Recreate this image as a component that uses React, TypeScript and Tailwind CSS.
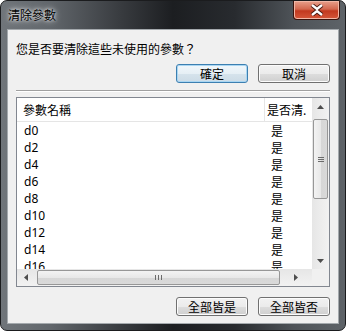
const rows = ["d0", "d2", "d4", "d6", "d8", "d10", "d12", "d14", "d16"];

const cjk = "font-['Noto_Sans_CJK_TC','Noto_Sans',sans-serif]";
const latin = "font-['Noto_Sans','Noto_Sans_CJK_TC',sans-serif]";

const WinButton = ({ label, primary }: { label: string; primary?: boolean }) => (
  <button
    className={`w-[72px] h-[19px] flex items-center justify-center rounded-[3px] border text-[12px] leading-none text-black ${cjk} ${
      primary
        ? "border-[#3c7fb1] bg-[linear-gradient(#f1f7fb_0%,#e6eff5_50%,#d6e3ec_51%,#ccdbe6_100%)] shadow-[inset_0_0_0_1px_#a9d6f2]"
        : "border-[#707070] bg-[linear-gradient(#f2f2f2_0%,#ebebeb_50%,#dddddd_51%,#cfcfcf_100%)] shadow-[inset_0_0_0_1px_#fcfcfc]"
    }`}
  >
    {label}
  </button>
);

const ArrowUp = () => (
  <svg width="7" height="4" viewBox="0 0 7 4">
    <path d="M0 4 L3.5 0 L7 4 Z" fill="#4d4d4d" />
  </svg>
);
const ArrowDown = () => (
  <svg width="7" height="4" viewBox="0 0 7 4">
    <path d="M0 0 L3.5 4 L7 0 Z" fill="#4d4d4d" />
  </svg>
);
const ArrowLeft = () => (
  <svg width="4" height="7" viewBox="0 0 4 7">
    <path d="M4 0 L0 3.5 L4 7 Z" fill="#4d4d4d" />
  </svg>
);
const ArrowRight = () => (
  <svg width="4" height="7" viewBox="0 0 4 7">
    <path d="M0 0 L4 3.5 L0 7 Z" fill="#4d4d4d" />
  </svg>
);

export default function App() {
  return (
    <div className="w-[346px] h-[331px] bg-white">
      <div className="w-[346px] h-[331px] flex flex-col rounded-[7px] border border-[#1b1c1e] bg-[linear-gradient(to_right,#70757a_0%,#62676c_14%,#383b3f_35%,#1c1e21_50%,#282b2f_68%,#4e5358_85%,#5e6368_100%)] overflow-hidden">
        {/* title bar */}
        <div className="h-[28px] flex items-start justify-between">
          <span
            className={`ml-[7px] mt-[6px] text-[12px] leading-[16px] text-black ${cjk} [text-shadow:0_0_6px_#ffffff,0_0_3px_#d8dcdf]`}
          >
            清除參數
          </span>
          <div className="mr-[5px] w-[47px] h-[19px] rounded-b-[4px] border border-t-0 border-[#3a130c] bg-[linear-gradient(#e8a08c_0%,#d3684f_45%,#c2391f_55%,#d5573a_100%)] shadow-[inset_0_0_0_1px_#f1b7a6] flex items-center justify-center">
            <svg width="14" height="12" viewBox="0 0 14 12">
              <path
                d="M2 1 L7 5 L12 1 M2 11 L7 7 L12 11"
                stroke="#4a1a12"
                strokeWidth="4.2"
                fill="none"
              />
              <path
                d="M2 1 L7 5 L12 1 M2 11 L7 7 L12 11"
                stroke="#ffffff"
                strokeWidth="2.4"
                fill="none"
              />
            </svg>
          </div>
        </div>

        {/* client area */}
        <div className="mx-[6px] mb-[6px] flex-1 border border-[#a4a9ad] bg-[#f0f0f0] flex flex-col px-[8px]">
          <p className={`pt-[11px] text-[12px] leading-[16px] text-black ${cjk}`}>
            您是否要清除這些未使用的參數？
          </p>

          <div className="mt-[7px] flex justify-end gap-[10px]">
            <WinButton label="確定" primary />
            <WinButton label="取消" />
          </div>

          <div className="mt-[7px] border-t border-[#a0a0a0] border-b border-b-white" />

          {/* list view */}
          <div className="mt-[5px] h-[190px] border border-[#828790] bg-white flex">
            <div className="flex-1 flex flex-col min-w-0">
              <div className={`h-[24px] flex border-b border-[#e5e5e5] text-[12px] text-black ${cjk}`}>
                <div className="w-[248px] pl-[6px] flex items-center border-r border-[#e5e5e5]">
                  參數名稱
                </div>
                <div className="flex-1 pl-[2px] flex items-center overflow-hidden whitespace-nowrap">
                  是否清.
                </div>
              </div>
              <div className="flex-1 overflow-hidden">
                {rows.map((r) => (
                  <div key={r} className="h-[17px] flex items-center text-[12px] text-black">
                    <div className={`w-[248px] pl-[7px] ${latin}`}>{r}</div>
                    <div className={`pl-[6px] ${cjk}`}>是</div>
                  </div>
                ))}
              </div>
              {/* horizontal scrollbar */}
              <div className="h-[17px] flex items-center bg-[linear-gradient(#e6e6e6,#f2f2f2)]">
                <div className="w-[17px] flex justify-center">
                  <ArrowLeft />
                </div>
                <div className="ml-[3px] w-[243px] h-[15px] rounded-[2px] border border-[#979797] bg-[linear-gradient(#f3f3f3_0%,#e8e8e8_50%,#d6d6d6_51%,#d9d9d9_100%)] flex items-center justify-center gap-[2px]">
                  <span className="w-px h-[5px] bg-[#6b6b6b]" />
                  <span className="w-px h-[5px] bg-[#6b6b6b]" />
                  <span className="w-px h-[5px] bg-[#6b6b6b]" />
                </div>
                <div className="flex-1 flex justify-center">
                  <ArrowRight />
                </div>
              </div>
            </div>
            {/* vertical scrollbar */}
            <div className="w-[17px] flex flex-col">
              <div className="flex-1 flex flex-col items-center bg-[linear-gradient(to_right,#e6e6e6,#f2f2f2)]">
                <div className="h-[17px] flex items-center justify-center">
                  <ArrowUp />
                </div>
                <div className="mt-[4px] w-[15px] h-[80px] rounded-[2px] border border-[#979797] bg-[linear-gradient(to_right,#f3f3f3_0%,#e8e8e8_50%,#d6d6d6_51%,#d9d9d9_100%)] flex flex-col items-center justify-center gap-[1px]">
                  <span className="w-[6px] h-px bg-[#6b6b6b]" />
                  <span className="w-[6px] h-px bg-[#6b6b6b]" />
                  <span className="w-[6px] h-px bg-[#6b6b6b]" />
                </div>
                <div className="flex-1" />
                <div className="h-[17px] flex items-center justify-center">
                  <ArrowDown />
                </div>
              </div>
              <div className="h-[17px] bg-[#f0f0f0]" />
            </div>
          </div>

          <div className="mt-[10px] flex justify-end gap-[10px]">
            <WinButton label="全部皆是" />
            <WinButton label="全部皆否" />
          </div>
        </div>
      </div>
    </div>
  );
}
